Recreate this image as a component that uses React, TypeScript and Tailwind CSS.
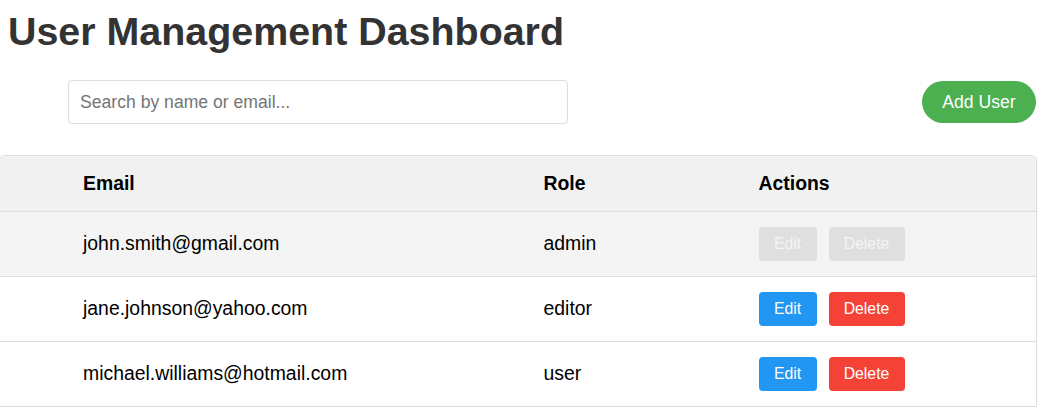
import React from "react";

type User = { email: string; role: string; disabled?: boolean };

const users: User[] = [
  { email: "john.smith@gmail.com", role: "admin", disabled: true },
  { email: "jane.johnson@yahoo.com", role: "editor" },
  { email: "michael.williams@hotmail.com", role: "user" },
];

const cols = "grid grid-cols-[68px_461px_215px_1fr] items-center";

function Row({ user, index }: { user: User; index: number }) {
  return (
    <div className={`${cols} h-[65px] border-t border-[#dddddd] ${index === 0 ? "bg-[#f4f4f4]" : "bg-white"}`}>
      <div />
      <div className="pl-[15px] text-[19.4px] text-black">{user.email}</div>
      <div className="pl-[14.5px] text-[19.4px] text-black">{user.role}</div>
      <div className="pl-[14.5px] flex gap-[12px]">
        {user.disabled ? (
          <>
            <button disabled className="w-[58px] h-[34px] rounded-[4px] bg-[#dfdfdf] text-[#f4f4f4] text-[15.8px]">Edit</button>
            <button disabled className="w-[76px] h-[34px] rounded-[4px] bg-[#dfdfdf] text-[#f4f4f4] text-[15.8px]">Delete</button>
          </>
        ) : (
          <>
            <button className="w-[58px] h-[34px] rounded-[4px] bg-[#2196f3] text-white text-[15.8px]">Edit</button>
            <button className="w-[76px] h-[34px] rounded-[4px] bg-[#f44336] text-white text-[15.8px]">Delete</button>
          </>
        )}
      </div>
    </div>
  );
}

export default function App() {
  return (
    <div className="min-h-[409px] bg-white font-['Liberation_Sans',Arial,sans-serif] overflow-hidden">
      <div className="pl-2 pr-[2px]">
        <h1 className="pt-[9px] text-[39.4px] leading-[45px] font-bold text-[#333333]">User Management Dashboard</h1>
        <div className="mt-[26px] flex items-center justify-between">
          <input
            type="text"
            placeholder="Search by name or email..."
            className="ml-[60px] w-[500px] h-[44px] rounded-[4px] border border-[#dddddd] px-[11px] text-[17.6px] text-black placeholder:text-[#757575] outline-none"
          />
          <button className="mr-[1px] w-[114px] h-[42px] rounded-full bg-[#4caf50] text-white text-[17.6px]">Add User</button>
        </div>
      </div>
      <div className="mt-[31px] -ml-[1px] mr-[2px] border border-b-0 border-[#dddddd] rounded-t-[6px] overflow-hidden">
        <div className={`${cols} h-[55px] bg-[#f1f1f1]`}>
          <div />
          <div className="pl-[15px] text-[19.4px] font-bold text-black">Email</div>
          <div className="pl-[14.5px] text-[19.4px] font-bold text-black">Role</div>
          <div className="pl-[14.5px] text-[19.4px] font-bold text-black">Actions</div>
        </div>
        {users.map((u, i) => (
          <Row key={u.email} user={u} index={i} />
        ))}
        <div className="border-t border-[#dddddd]" />
      </div>
    </div>
  );
}
